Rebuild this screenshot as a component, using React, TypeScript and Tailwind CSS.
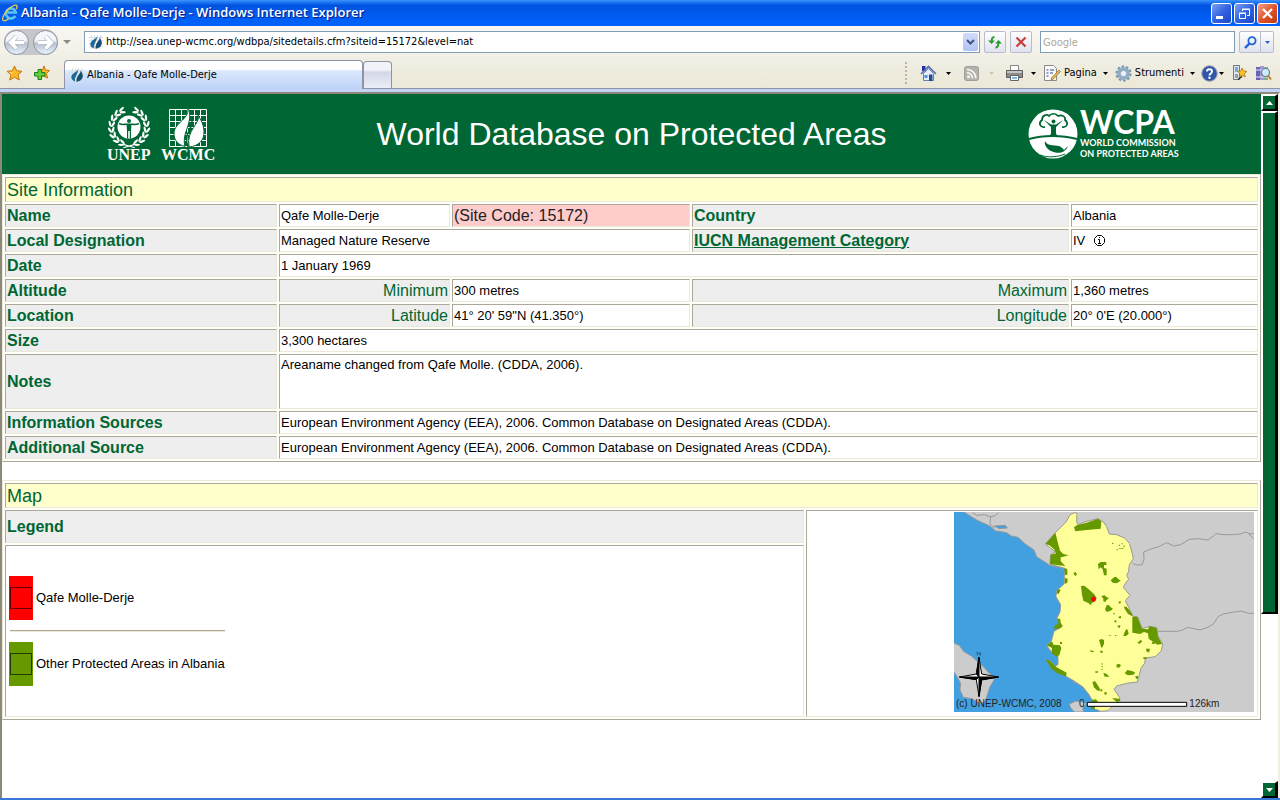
import React from "react";
import clsx from "clsx";

// Shared styles for the bordered table cells
const cell = "border border-t-[#aca899] border-l-[#aca899] border-b-[#ece9d8] border-r-[#ece9d8] px-px py-0";
const label = clsx(cell, "h-[23px] bg-[#eeeeee] text-left text-base leading-[18px] font-bold text-[#006633]");
const subLabel = clsx(cell, "h-[23px] bg-[#eeeeee] text-right text-base leading-[18px] font-normal text-[#006633]");
const value = clsx(cell, "h-[23px] bg-white text-[13px] leading-[18px] text-black");
const section = clsx(cell, "h-[25px] bg-[#ffffcc] text-left text-lg leading-5 font-normal text-[#006633]");
const grid =
  "w-full table-fixed border-separate border-spacing-[2px] border border-t-[#ece9d8] border-l-[#ece9d8] border-b-[#aca899] border-r-[#aca899] bg-[#fffffa]";

function Caret({ className = "fill-black" }: { className?: string }) {
  return (
    <svg width="5" height="3" viewBox="0 0 5 3" className={className} aria-hidden="true">
      <path d="M0 0h5L2.500 3z" />
    </svg>
  );
}

function IeLogo() {
  return (
    <svg width="16" height="18" viewBox="0 0 16 18" aria-hidden="true">
      <path
        d="M13.300 11.800a5 5 0 1 1 .5-3.300H5.500"
        fill="none"
        stroke="#5cc3f5"
        strokeWidth="2.600"
      />
      <path d="M1 16.500C-1 12 8 2 13.500 1.200c2.500-.2 1.600 2.600.6 4" fill="none" stroke="#f2c94c" strokeWidth="1.300" />
      <path d="M1 16.500c1.500 1 4-.5 5.500-1.800" fill="none" stroke="#f2c94c" strokeWidth="1.300" />
    </svg>
  );
}

// Site favicon, a small blue flame over a grid
function Flame() {
  return (
    <svg width="14" height="14" viewBox="0 0 14 14" className="shrink-0" aria-hidden="true">
      <path d="M0 2.500h14M0 5.500h14M0 8.500h14M0 11.500h14M2.500 0v14M5.500 0v14M8.500 0v14M11.500 0v14" stroke="#d8dde2" strokeWidth="1" />
      <path d="M8 .5C8.500 4 3 4 1.500 8c-.8 2.500 1 4.500 3.500 5.500C4 9 8.800 5.500 8 .5z" fill="#1d6a96" />
      <path d="M10.500 2.500c.8 3-4.500 5-4 11.300 4-.5 6.500-3 6.300-6.300-.2-2-1.300-3.700-2.300-5z" fill="#174f74" />
    </svg>
  );
}

function TitleBar() {
  return (
    <header className="flex h-[26px] shrink-0 items-center bg-linear-to-b from-[#3a93ff] from-0% via-[#0053e1] via-20% to-[#0062fb] to-90% pr-[2px] pl-[2px]">
      <IeLogo />
      <h1 className="ml-[3px] flex-1 truncate font-['Open_Sans','Noto_Sans',sans-serif] text-[13px] font-semibold text-white [text-shadow:1px_1px_1px_#0a1883]">
        Albania - Qafe Molle-Derje - Windows Internet Explorer
      </h1>
      <div className="flex gap-[2px]">
        <button aria-label="Minimize" className="size-[21px] rounded-[3px] border border-white bg-linear-to-br from-[#7ea2f2] via-[#3262df] to-[#1c46c8]">
          <svg viewBox="0 0 19 19">
            <path d="M4 12h7v3H4z" fill="#fff" />
          </svg>
        </button>
        <button aria-label="Restore" className="size-[21px] rounded-[3px] border border-white bg-linear-to-br from-[#7ea2f2] via-[#3262df] to-[#1c46c8]">
          <svg viewBox="0 0 19 19" fill="none" stroke="#fff">
            <path d="M7.500 7V5.500h7v6H12M7 5h8" />
            <path d="M4.500 9.500h6v5h-6zM4 9h7" />
          </svg>
        </button>
        <button aria-label="Close" className="size-[21px] rounded-[3px] border border-white bg-linear-to-br from-[#f0a088] via-[#e0532c] to-[#c03a14]">
          <svg viewBox="0 0 19 19">
            <path d="M5 5l9 9M14 5l-9 9" stroke="#fff" strokeWidth="2.200" />
          </svg>
        </button>
      </div>
    </header>
  );
}

// Glossy round back / forward button
function RoundButton({ name, d }: { name: string; d: string }) {
  return (
    <button aria-label={name} className="size-[25px] rounded-full border border-[#8e949e] bg-linear-to-b from-[#f4f6f9] from-40% via-[#b9c2d1] via-55% to-[#e6f4fd]">
      <svg viewBox="0 0 23 23">
        <path d={d} fill="none" stroke="#9aa3b2" strokeWidth="4.500" />
        <path d={d} fill="none" stroke="#fff" strokeWidth="3.400" />
      </svg>
    </button>
  );
}

function NavBar() {
  const small = "flex h-[22px] items-center justify-center rounded-[2px] border border-[#b8bccb] bg-linear-to-b from-white to-[#dfe2ee]";
  return (
    <nav className="flex h-8 shrink-0 items-center bg-linear-to-b from-[#f8f7f3] to-[#f1efe5] pr-[6px] pl-1">
      <div className="flex h-[26px] items-center gap-1 rounded-full bg-[#c5c7cb]">
        <RoundButton name="Back" d="M19 11.500H6M11.500 5.500l-6 6 6 6" />
        <RoundButton name="Forward" d="M4 11.500h13M11.500 5.500l6 6-6 6" />
      </div>
      <button aria-label="Recent pages" className="mr-[13px] ml-[5px]">
        <svg width="8" height="4" viewBox="0 0 8 4">
          <path d="M0 0h8L4 4z" fill="#8b8b8b" />
        </svg>
      </button>
      <div className="flex h-[22px] flex-1 items-center border border-[#7f9db9] bg-white pr-px pl-1">
        <Flame />
        <input
          aria-label="Address"
          defaultValue="http://sea.unep-wcmc.org/wdbpa/sitedetails.cfm?siteid=15172&level=nat"
          className="ml-[3px] min-w-0 flex-1 bg-transparent font-['DejaVu_Sans_Condensed','Noto_Sans',sans-serif] text-[11px] text-black outline-none"
        />
        <button aria-label="Show addresses" className="flex h-[18px] w-[15px] items-center justify-center rounded-[2px] bg-linear-to-b from-[#d2ddfb] to-[#b0c3f2]">
          <svg width="9" height="6" viewBox="0 0 9 6">
            <path d="M1 1l3.500 3.500L8 1" fill="none" stroke="#41557c" strokeWidth="2" />
          </svg>
        </button>
      </div>
      <button aria-label="Refresh" className={clsx(small, "ml-1 w-[22px]")}>
        <svg width="16" height="14" viewBox="0 0 16 14" fill="none" stroke="#2f9a33" strokeWidth="2">
          <path d="M7.500 2C5 2 4.500 4 4.500 7" />
          <path d="M1 5.500h7L4.500 9z" fill="#2f9a33" stroke="none" />
          <path d="M8.500 12.500c2.500 0 3-2 3-5" />
          <path d="M8 8.500h7L11.500 5z" fill="#2f9a33" stroke="none" />
        </svg>
      </button>
      <button aria-label="Stop" className={clsx(small, "ml-1 w-[22px]")}>
        <svg width="12" height="12" viewBox="0 0 12 12">
          <path d="M1.500 1.500l9 9M10.500 1.500l-9 9" stroke="#c93c3c" strokeWidth="2.200" />
        </svg>
      </button>
      <input
        aria-label="Search"
        placeholder="Google"
        className="ml-2 h-[22px] w-[195px] border border-[#7f9db9] bg-white px-[2px] font-['DejaVu_Sans_Condensed','Noto_Sans',sans-serif] text-[11px] outline-none placeholder:text-[#aca899]"
      />
      <div className="ml-1 flex">
        <button aria-label="Go" className={clsx(small, "w-[22px] rounded-r-none")}>
          <svg width="13" height="13" viewBox="0 0 13 13" fill="none" stroke="#1f62d8">
            <circle cx="8" cy="4.800" r="3.600" strokeWidth="1.800" />
            <path d="M5.300 7.600L1 12" strokeWidth="2.400" />
          </svg>
        </button>
        <button aria-label="Search options" className={clsx(small, "w-[13px] rounded-l-none border-l-0")}>
          <Caret className="fill-[#1f62d8]" />
        </button>
      </div>
    </nav>
  );
}

function TabBar() {
  return (
    <div className="flex h-[31px] shrink-0 items-end border-b border-[#8f93a3] bg-linear-to-b from-[#f1efe5] to-[#ebe8d7]">
      <div className="flex h-full items-center gap-[11px] pr-[14px] pl-[6px]">
        <button aria-label="Favorites">
          <svg width="17" height="16" viewBox="0 0 17 16">
            <path d="M8.500 1l2.200 4.800 5.300.5-4 3.500 1.300 5.200-4.800-2.700L3.700 15 5 9.800 1 6.300l5.300-.5z" fill="#fdb827" stroke="#c87410" />
            <path d="M8.500 3L7 7l-4 .3 3 2z" fill="#ffe48a" />
          </svg>
        </button>
        <button aria-label="Add to favorites">
          <svg width="16" height="16" viewBox="0 0 16 16">
            <path d="M10 1l1.500 4 4 .5-3 3 1 4.500-4-2-4 1.500L7 8.500 4.500 5.500 8.500 5z" fill="#fdb827" stroke="#c87410" />
            <path d="M4 4.500h3.500v3H11V11H7.500v3.500H4V11H.5V7.500H4z" fill="#5fce3a" stroke="#1f7d1b" />
          </svg>
        </button>
      </div>
      <button className="-mb-px flex h-[29px] w-[299px] items-center gap-[3px] rounded-t-[4px] border border-b-0 border-[#8f93a3] bg-linear-to-b from-white from-30% via-[#dbe8fd] via-35% to-[#bcd3f8] pl-[5px] font-['DejaVu_Sans_Condensed','Noto_Sans',sans-serif] text-[11px] text-black">
        <Flame />
        Albania - Qafe Molle-Derje
      </button>
      <button aria-label="New tab" className="h-[27px] w-[29px] rounded-t-[4px] border border-b-0 border-[#8f93a3] bg-linear-to-b from-[#f2f3f9] from-30% via-[#d3d7e8] via-40% to-[#eceef6]" />
      <Toolbar />
    </div>
  );
}

function Toolbar() {
  const item = "flex items-center text-black";
  return (
    <div className="ml-auto flex h-full items-center pr-[8px] font-['DejaVu_Sans_Condensed','Noto_Sans',sans-serif] text-[11px]">
      <div className="mr-[13px] h-[22px] border-l-2 border-dotted border-[#b9b6a7]" />
      <button aria-label="Home" className={clsx(item, "mr-[13px] gap-[9px]")}>
        <svg width="17" height="17" viewBox="0 0 17 17">
          <path d="M2 1h3.500v5H2z" fill="#2233aa" />
          <path d="M3.500 8.500v7h10v-7l-5-5z" fill="#e8eef8" stroke="#6a7fae" />
          <path d="M1 9l7.500-7.500L16 9" fill="none" stroke="#5470ad" strokeWidth="1.600" />
          <path d="M9 9.500h3.500V16H9z" fill="#1e4f9c" />
          <path d="M4.500 10H7.500v3h-3z" fill="#4f94dc" />
        </svg>
        <Caret />
      </button>
      <button aria-label="Feeds" className={clsx(item, "mr-3 gap-[10px]")}>
        <svg width="15" height="15" viewBox="0 0 15 15">
          <rect x=".5" y=".5" width="14" height="14" rx="2" fill="#b4b3ac" stroke="#9f9e98" />
          <circle cx="4.500" cy="10.800" r="1.400" fill="#fff" />
          <path d="M3 6.800a5.500 5.500 0 0 1 5.500 5.500M3 3.500a8.800 8.800 0 0 1 8.800 8.800" fill="none" stroke="#fff" strokeWidth="1.500" />
        </svg>
        <Caret className="fill-[#c9c6b8]" />
      </button>
      <button aria-label="Print" className={clsx(item, "mr-[8px] gap-[8px]")}>
        <svg width="17" height="16" viewBox="0 0 17 16">
          <path d="M4.500.5h8v6h-8z" fill="#fff" stroke="#888" />
          <path d="M.5 5.500h16v7H.5z" fill="#8c8c8c" stroke="#5d5d5d" />
          <path d="M1 6h15v2H1z" fill="#c5c5c5" />
          <path d="M4.500 10.500h8v5h-8z" fill="#f5fbff" stroke="#666" />
          <path d="M6 12h5v2H6z" fill="#78b8e8" />
        </svg>
        <Caret />
      </button>
      <button className={clsx(item, "mr-[7px]")}>
        <svg width="17" height="16" viewBox="0 0 17 16" className="mr-[3px]">
          <path d="M.5.500h9l3 3v12H.5z" fill="#fafafa" stroke="#8a8a8a" />
          <path d="M2.500 5h2M6 5h4M2.500 8h2M6 8h3M2.500 11h2" stroke="#6d84b5" strokeWidth="1.500" />
          <path d="M15 5l1.500 1.500-7 7.500-2.500 1 .8-2.500z" fill="#eeb84a" stroke="#7c6a3c" strokeWidth=".7" />
        </svg>
        Pagina
        <span className="ml-[6px]">
          <Caret />
        </span>
      </button>
      <button className={clsx(item, "mr-[6px]")}>
        <svg width="17" height="17" viewBox="0 0 17 17" className="mr-[3px]">
          <circle cx="8.500" cy="8.500" r="7" fill="none" stroke="#7895ac" strokeWidth="2.200" strokeDasharray="2.600 1.800" />
          <circle cx="8.500" cy="8.500" r="4.800" fill="none" stroke="#8fadc5" strokeWidth="3.400" />
          <circle cx="8.500" cy="8.500" r="3.100" fill="#edf3f7" stroke="#7895ac" strokeWidth=".7" />
        </svg>
        Strumenti
        <span className="ml-[6px]">
          <Caret />
        </span>
      </button>
      <button aria-label="Help" className={clsx(item, "mr-[8px] gap-px")}>
        <svg width="17" height="17" viewBox="0 0 17 17">
          <circle cx="8.500" cy="8.500" r="7.700" fill="#2f56a8" stroke="#8f98a8" />
          <path d="M6 6.500C6 3.500 11 3.500 11 6.500c0 2-2.500 2-2.500 4" fill="none" stroke="#fff" strokeWidth="1.900" />
          <circle cx="8.500" cy="12.800" r="1.200" fill="#fff" />
        </svg>
        <Caret />
      </button>
      <button aria-label="Send to" className="mr-[7px]">
        <svg width="16" height="16" viewBox="0 0 16 16">
          <path d="M1.500.5h6v14h-6z" fill="#dfe6ee" stroke="#6e7785" />
          <path d="M3 2h3v5H3z" fill="#7fa9d6" />
          <path d="M3 10h3M3 12h3" stroke="#555" />
          <path d="M10 3l1.500 3 3.500.3-2.600 2.400.8 3.300-3-1.800-3 1.800.8-3.300L5.500 6.300 8.800 6z" fill="#fcc32c" stroke="#a8741a" strokeWidth=".8" />
          <path d="M6 14.500l4-3" stroke="#222" strokeWidth="1.300" />
        </svg>
      </button>
      <button aria-label="Research">
        <svg width="17" height="16" viewBox="0 0 17 16">
          <path d="M1 2h4v13H1z" fill="#6a63b4" />
          <path d="M5 1h4v14H5z" fill="#9f9ad6" />
          <path d="M9 2h4v13H9z" fill="#7fb08a" />
          <path d="M1 5h12M1 12h12" stroke="#e9e5f6" />
          <circle cx="10.500" cy="7.500" r="4" fill="#cfeafa" stroke="#62809c" strokeWidth="1.200" />
          <path d="M13 10.500l3 4" stroke="#b5812c" strokeWidth="2" />
        </svg>
      </button>
    </div>
  );
}

// Angles of the leaf pairs along one half of the wreath
const leafAngles = [24, 43, 62, 81, 100, 119, 138, 157];

function WreathHalf() {
  return (
    <g>
      {leafAngles.map((angle) => (
        <g key={angle} transform={`rotate(${angle} 24 22)`}>
          <ellipse cx="24" cy="38.800" rx="3.300" ry="1.200" transform="rotate(24 24 38.800)" />
          <ellipse cx="24" cy="42.200" rx="3.300" ry="1.200" transform="rotate(-24 24 42.200)" />
        </g>
      ))}
    </g>
  );
}

function UnepLogo() {
  return (
    <svg width="110" height="58" viewBox="0 0 110 58" fill="#fff" role="img" aria-label="UNEP WCMC">
      <g transform="translate(1 1) scale(.96)">
        <WreathHalf />
        <g transform="matrix(-1 0 0 1 48 0)">
          <WreathHalf />
        </g>
        <path d="M18 40l12 3.500M30 40l-12 3.500" fill="none" stroke="#fff" strokeWidth="1.200" />
      </g>
      <circle cx="24" cy="22" r="11.500" />
      <path d="M14 18.500c3 1.500 5 .8 7 .8h6c2 0 4 .7 7-.8" fill="none" stroke="#006633" strokeWidth="1.600" />
      <path d="M21.500 19h5l-.5 7v7.500h-1.200V26h-1.600v7.500H22V26z" fill="#006633" />
      <circle cx="24" cy="16" r="2" fill="#006633" />
      <path d="M64.500 4.500h37v37h-37zM64.500 10.500h37M64.500 16.500h37M64.500 22.500h37M64.500 29.500h37M64.500 35.500h37M70.500 4.500v37M76.500 4.500v37M82.500 4.500v37M89.500 4.500v37M95.500 4.500v37" fill="none" stroke="#fff" />
      <path d="M82.500 1.500C86 14 69.500 17 69 28c-.3 8 5 12 11 13.500C76 27 90 17 82.500 1.500z" stroke="#006633" />
      <path d="M93 10c3 9-12 14-9 32 10-1 15.500-7 15-16-.4-7-3-11-6-16z" stroke="#006633" />
      <path d="M87 16c1 8-9 12-4 26" fill="none" stroke="#006633" strokeWidth="1.500" />
      <g className="font-['Liberation_Serif',serif] text-base font-bold">
        <text x="2" y="55">UNEP</text>
        <text x="56" y="55">WCMC</text>
      </g>
    </svg>
  );
}

function WcpaLogo() {
  return (
    <svg width="156" height="66" viewBox="0 -6 156 66" fill="#fff" role="img" aria-label="WCPA World Commission on Protected Areas">
      <circle cx="26" cy="27" r="24.500" />
      <path d="M2 32c14-4 33-4 48 0" fill="none" stroke="#006633" strokeWidth="2" />
      <path d="M18 20c-5 1-7-4-3-7 0-5 5-6 7-4 2-3 7-3 9 0 4-2 8 1 7 4 4 3 2 8-3 7" fill="none" stroke="#006633" strokeWidth="1.700" />
      <path d="M17 13l7 7v6c0 2-2 3-4 4h13c-2-1-4-2-4-4v-6l7-7-7 4.500h-5z" fill="#006633" />
      <circle cx="26.500" cy="14.500" r="2" fill="#006633" />
      <path d="M18 34c2 5 8 4 14 5 3 1 4 3 5 4l4-4c-3 8-11 8-17 5-4-2-7-6-6-10z" fill="#006633" />
      <path d="M13 48c8 3 18 2 25-1" fill="none" stroke="#006633" />
      <text x="53" y="27" className="font-['Lato',sans-serif] text-[32px] font-bold">WCPA</text>
      <g className="font-['Lato',sans-serif] text-[9px] font-bold">
        <text x="53" y="39">WORLD COMMISSION</text>
        <text x="53" y="50">ON PROTECTED AREAS</text>
      </g>
    </svg>
  );
}

function SiteInformation() {
  return (
    <table className={grid}>
      <colgroup>
        <col className="w-[272px]" />
        <col className="w-[171px]" />
        <col className="w-[238px]" />
        <col />
        <col className="w-[187px]" />
      </colgroup>
      <tbody>
        <tr>
          <th colSpan={5} className={section}>Site Information</th>
        </tr>
        <tr>
          <th className={label}>Name</th>
          <td className={value}>Qafe Molle-Derje</td>
          <td className={clsx(cell, "bg-[#ffcccc] text-base leading-[18px] text-[#222222]")}>(Site Code: 15172)</td>
          <th className={label}>Country</th>
          <td className={value}>Albania</td>
        </tr>
        <tr>
          <th className={label}>Local Designation</th>
          <td colSpan={2} className={value}>Managed Nature Reserve</td>
          <th className={label}>
            <a href="#iucn" className="underline">IUCN Management Category</a>
          </th>
          <td className={value}>
            <span className="flex items-center gap-[9px]">
              IV
              <svg width="11" height="11" viewBox="0 0 11 11" fill="none" stroke="#000">
                <path d="M3.500.5h4l3 3v4l-3 3h-4l-3-3v-4z" />
                <path d="M4 4.500h1.500V8M4 8.500h3M5 2.500h1" />
              </svg>
            </span>
          </td>
        </tr>
        <tr>
          <th className={label}>Date</th>
          <td colSpan={4} className={value}>1 January 1969</td>
        </tr>
        <tr>
          <th className={label}>Altitude</th>
          <th className={subLabel}>Minimum</th>
          <td className={value}>300 metres</td>
          <th className={subLabel}>Maximum</th>
          <td className={value}>1,360 metres</td>
        </tr>
        <tr>
          <th className={label}>Location</th>
          <th className={subLabel}>Latitude</th>
          <td className={value}>41° 20' 59"N (41.350°)</td>
          <th className={subLabel}>Longitude</th>
          <td className={value}>20° 0'E (20.000°)</td>
        </tr>
        <tr>
          <th className={label}>Size</th>
          <td colSpan={4} className={value}>3,300 hectares</td>
        </tr>
        <tr>
          <th className={label}>Notes</th>
          <td colSpan={4} className={clsx(cell, "h-[55px] bg-white align-top text-[13px] leading-5 text-black")}>
            Areaname changed from Qafe Molle. (CDDA, 2006).
          </td>
        </tr>
        <tr>
          <th className={label}>Information Sources</th>
          <td colSpan={4} className={value}>
            European Environment Agency (EEA), 2006. Common Database on Designated Areas (CDDA).
          </td>
        </tr>
        <tr>
          <th className={label}>Additional Source</th>
          <td colSpan={4} className={value}>
            European Environment Agency (EEA), 2006. Common Database on Designated Areas (CDDA).
          </td>
        </tr>
      </tbody>
    </table>
  );
}

// Protected areas drawn over the country outline
const protectedAreas = [
  "M402 82L410 76L440 68L474 56L484 64L482 86L440 90L406 94z",
  "M316 132L346 98L350 114L360 152L370 162L386 166L370 170L362 172L362 184L376 198L356 196L330 192L332 164L348 160L342 148L328 136z",
  "M474 192L482 186L498 186L500 194L492 196L492 204L500 206V226H492L488 208L482 202L476 208z",
  "M512 241L522 232L528 230L534 236L542 242L530 250L518 248z",
  "M423 258L433 257L446 268L462 282L470 294L466 304L456 308L452 316L446 310L430 302L426 284z",
  "M484 288L494 286L500 292L507 294L500 300L496 306L490 304L490 296z",
  "M495 328L500 316L506 314L512 322L519 326L512 332L500 336z",
  "M551 320H559L568 330L577 342L576 348L564 342L556 330z",
  "M577 350L592 350L606 386L624 388L628 378L650 384L654 410L666 432L652 434L626 416L624 400L612 396L600 402L577 398z",
  "M550 408L554 396L560 386L564 392L566 402L558 408z",
  "M477 420L485 417L492 420V432L488 440L484 444L480 430z",
  "M320 436L336 424L340 434L360 436L364 444L358 466L350 470L334 460L336 444z",
  "M317 478L330 482L350 502L380 518L378 530L350 518L334 506z",
  "M350 354L361 358L362 368L368 378L358 386L340 386L346 376L356 370z",
  "M372 206L382 208V224L376 226L374 216zM374 234L383 236L382 248L374 252z",
  "M554 520L562 510L578 514L586 518L580 524L564 526z",
  "M457 547L465 543L471 552L480 566L478 574L470 570L462 562z",
  "M516 594L538 596L542 602L530 606z",
  "M529 494L537 491L543 496L538 503L530 502z",
  "M490 518L500 522L508 530L494 530z",
  "M453 600L468 598L474 606L460 608z",
  "M453 622h12v6h-12zM481 568h6v6h-6zM492 578l6-3 3 6-6 4zM536 306l5-4 2 7-7 2zM535 350l8-2v7h-6zM523 362l6-2v8l-6-2zM532 377l9-1-1 8-6-2zM618 446h12l-3 12-8-4zM592 428l10-8 5 3-8 9zM637 425l6 2 2 5-10-1zM400 219l7-3 4 8-6 4zM450 451l12 2-2 4-8-2zM480 452h8v6l-6 1zM466 514h8v4h-8zM352 266l10 4-6 12-6-2zM360 426h6v6h-6zM610 472h10v5h-10zM586 528h8v8h-6z",
  "M516 129h4v3h-4zM536 134h4v3h-4zM544 130h4v3h-4zM550 137h5v3h-5zM538 144h4v3h-4zM530 148h4v3h-4zM545 144h5v3h-5zM485 490h3v4h-3zM485 498h3v4h-3zM485 506h3v4h-3zM508 405h4v3h-4zM525 405h4v3h-4zM520 339h4v4h-4zM350 215h3v3h-3z",
];

function SiteMap() {
  return (
    <svg width="300" height="200" viewBox="42 36 900 600" role="img" aria-label="Map of Albania">
      <path d="M42 36h900v600H42z" fill="#cccccc" />
      {/* Sea */}
      <path
        d="M38 30L72 36L110 60L150 78L166 92L200 98L214 108L234 112L256 132L282 150L290 170L330 196L378 206L400 300V545L428 560L446 584L460 604L480 640H38z"
        fill="#429fe0"
        stroke="#999999"
        strokeWidth="3"
      />
      <path d="M162 78L196 76L202 84L178 86z" fill="#429fe0" stroke="#999999" strokeWidth="3" />
      <path
        d="M38 428L58 436L70 454L94 468L116 488L130 500L146 518L162 532L162 540L150 560L142 584L136 604L120 610L96 596L70 592L60 570L62 550L50 528L38 510z"
        fill="#cccccc"
        stroke="#999999"
        strokeWidth="3"
      />
      {/* Albania */}
      <path
        d="M404 38L411 40L410 66L414 74L440 64L474 56L490 66L500 80L508 102L530 104L554 114L568 130L574 150L580 176L568 194L566 214L560 226L566 238L556 250L550 262L558 272L570 286L556 302L566 322L578 348L594 352L606 386L626 380L650 382L654 408L668 432L664 452L646 470L616 474L614 490L604 502L592 546L560 550L530 558L522 568L540 594L536 602L518 618L504 632L484 634L460 626L470 612L460 606L446 582L428 560L404 544L380 530L350 516L318 480L330 482L346 498L354 494L354 470L334 456L320 436L334 424L342 394L366 380L350 356L360 336L362 314L348 290L350 272L372 252L374 212L378 206L350 198L330 192L332 164L346 156L316 132L346 98L378 66L390 44z"
        fill="#ffff99"
        stroke="#999999"
        strokeWidth="3"
      />
      {protectedAreas.map((d) => (
        <path key={d} d={d} fill="#669900" />
      ))}
      <path d="M454 293l8-4 6 6-2 7-6 4-7-5z" fill="#ff0000" />
      {/* Neighbouring borders */}
      <g fill="none" stroke="#999999" strokeWidth="3">
        <path d="M98 38l12 8 24-2 14 6 16-2 12-10M152 50l-2 20 12 14" />
        <path d="M578 190L590 195L606 194L612 178L611 156L630 148L656 140L680 128L702 138L722 134L748 118L776 116L804 120L820 108L828 101L852 104L880 104L900 102L918 96L930 102L942 101M926 102L942 116" />
        <path d="M652 394H712L728 390L742 382L762 386L780 390L804 382L822 370L834 350L850 342L876 337L904 333L926 340H942" />
      </g>
      <path d="M388 612L406 604L432 606L440 612L428 620L430 636H404L392 624z" fill="#cccccc" stroke="#999999" strokeWidth="3" />
      {/* Compass rose */}
      <g stroke="#000" strokeWidth="3">
        <path d="M117 472l8 50 50 9-50 8-8 50-8-50-50-8 50-9z" fill="#fff" />
        <path d="M117 472v59l-8-9zM176 531h-59l8 9zM117 590v-59l8 8zM58 531h59l-8 8z" fill="#000" />
      </g>
      <path d="M112 466v-10l9 10v-10" fill="none" stroke="#1c3f5e" strokeWidth="2" />
      {/* Scale bar */}
      <path d="M442 607h298v12H442z" fill="#fff" stroke="#000" strokeWidth="3" />
      <g className="fill-[#222222] font-['Liberation_Sans',sans-serif] text-[30px]">
        <text x="48" y="620">(c) UNEP-WCMC, 2008</text>
        <text x="417" y="620">0</text>
        <text x="748" y="620">126km</text>
      </g>
    </svg>
  );
}

function MapSection() {
  return (
    <table className={grid}>
      <colgroup>
        <col />
        <col className="w-[452px]" />
      </colgroup>
      <tbody>
        <tr>
          <th colSpan={2} className={section}>Map</th>
        </tr>
        <tr>
          <th className={clsx(cell, "h-[33px] bg-[#eeeeee] text-left text-base leading-[18px] font-bold text-[#006633]")}>Legend</th>
          <td rowSpan={2} className={clsx(cell, "bg-white align-top")}>
            <div className="flex justify-end pt-px pr-[2px]">
              <SiteMap />
            </div>
          </td>
        </tr>
        <tr>
          <td className={clsx(cell, "h-[172px] bg-white align-middle text-[13px] leading-[18px] text-black")}>
            <div className="w-fit pl-[2px]">
              <div className="flex items-center gap-[3px]">
                <span className="flex h-[44px] w-6 items-center justify-center bg-[#ff0000]">
                  <span className="size-[22px] border border-[#660000]" />
                </span>
                Qafe Molle-Derje
              </div>
              <hr className="mt-[10px] mb-[10px] ml-px border-t border-b border-t-[#aca899] border-b-[#ece9d8]" />
              <div className="flex items-center gap-[3px]">
                <span className="flex h-[44px] w-6 items-center justify-center bg-[#669900]">
                  <span className="size-[22px] border border-[#263a00]" />
                </span>
                Other Protected Areas in Albania
              </div>
            </div>
          </td>
        </tr>
      </tbody>
    </table>
  );
}

function ScrollBar() {
  const block = "border-t-2 border-l-2 border-r-3 border-b-2 border-t-white border-l-white border-r-black border-b-black bg-[#006633]";
  return (
    <div className="flex w-[17px] shrink-0 flex-col bg-white">
      <button aria-label="Scroll up" className={clsx(block, "flex h-[17px] items-center justify-center")}>
        <svg width="7" height="4" viewBox="0 0 7 4">
          <path d="M0 4h7L3.500 0z" fill="#fff" />
        </svg>
      </button>
      <div className="flex-1">
        <div className={clsx(block, "h-[75%]")} />
      </div>
      <button aria-label="Scroll down" className={clsx(block, "flex h-[17px] items-center justify-center")}>
        <svg width="7" height="4" viewBox="0 0 7 4">
          <path d="M0 0h7L3.500 4z" fill="#fff" />
        </svg>
      </button>
    </div>
  );
}

export default function App() {
  return (
    <div className="flex h-screen flex-col overflow-hidden border-b-2 border-[#3a78d8] bg-[#ece9d8] font-['Liberation_Sans',Arial,sans-serif]">
      <TitleBar />
      <NavBar />
      <TabBar />
      <div className="h-[3px] shrink-0 bg-[#c3d3f5]" />
      <div className="flex min-h-0 flex-1 border-t-2 border-r-2 border-l-2 border-t-[#8c897c] border-r-[#f1efe2] border-l-[#8c897c] bg-white">
        <main className="min-w-0 flex-1 overflow-hidden">
          <div className="grid h-20 grid-cols-[1fr_auto_1fr] items-center bg-[#006633]">
            <div className="pl-[103px]">
              <UnepLogo />
            </div>
            <h2 className="text-[32px] text-white">World Database on Protected Areas</h2>
            <div className="flex justify-end pr-[78px]">
              <WcpaLogo />
            </div>
          </div>
          <SiteInformation />
          <div className="mt-[18px]">
            <MapSection />
          </div>
        </main>
        <ScrollBar />
      </div>
    </div>
  );
}
